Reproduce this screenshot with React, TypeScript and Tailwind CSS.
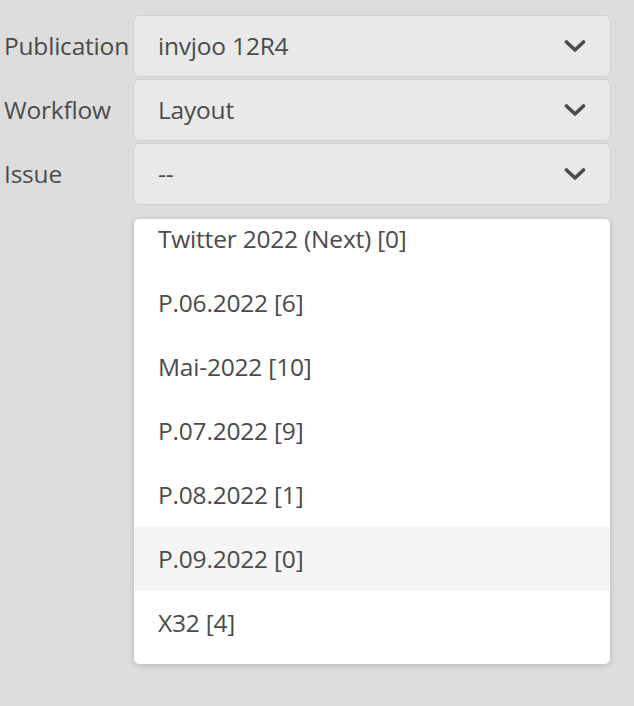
import React from "react";

const Chevron = () => (
  <svg width="22" height="14" viewBox="0 0 22 14" className="shrink-0">
    <path d="M2.5 3 L11 11 L19.5 3" fill="none" stroke="#4b4b4b" strokeWidth="3.6" strokeLinecap="round" strokeLinejoin="round" />
  </svg>
);

const rows = [
  { label: "Publication", value: "invjoo 12R4" },
  { label: "Workflow", value: "Layout" },
  { label: "Issue", value: "--" },
];

const items = [
  "Twitter 2022 (Next) [0]",
  "P.06.2022 [6]",
  "Mai-2022 [10]",
  "P.07.2022 [9]",
  "P.08.2022 [1]",
  "P.09.2022 [0]",
  "X32 [4]",
];

export default function App() {
  return (
    <div
      className="w-[634px] h-[706px] bg-[#dddddd] text-[#4b4b4b] overflow-hidden"
      style={{ fontFamily: '"Open Sans", "Noto Sans", sans-serif' }}
    >
      <div className="pt-[15px] flex flex-col gap-[2px]">
        {rows.map((r) => (
          <div key={r.label} className="flex items-center">
            <div className="w-[133px] pl-[4px] text-[24.5px] leading-none tracking-[-0.2px] whitespace-nowrap">
              {r.label}
            </div>
            <div className="w-[478px] h-[62px] flex items-center justify-between pl-[24px] pr-[24px] bg-[#e9e9e9] border border-[#cfcfcf] rounded-[6px]">
              <span className="text-[24.5px] leading-none tracking-[-0.2px]">{r.value}</span>
              <Chevron />
            </div>
          </div>
        ))}
      </div>
      <div className="ml-[134px] mt-[14px] w-[476px] h-[445px] bg-white rounded-[5px] shadow-[0_1px_6px_rgba(0,0,0,0.18)] overflow-hidden">
        <div className="mt-[-12px] flex flex-col">
          {items.map((it) => (
            <div
              key={it}
              className={`h-[64px] flex items-center pl-[24px] text-[24.5px] tracking-[-0.2px] ${
                it === "P.09.2022 [0]" ? "bg-[#f5f5f5]" : ""
              }`}
            >
              {it}
            </div>
          ))}
        </div>
      </div>
    </div>
  );
}
